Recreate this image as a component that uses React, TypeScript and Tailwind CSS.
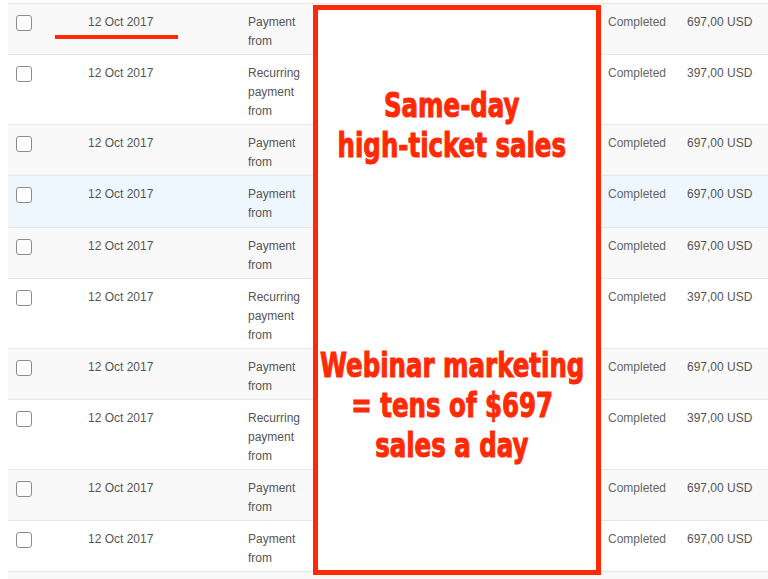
const rows = [
  { type: ["Payment", "from"], amount: "697,00 USD", bg: "bg-[#f9f9f9] pb-[3px]" },
  { type: ["Recurring", "payment", "from"], amount: "397,00 USD", bg: "bg-white pb-[3px]" },
  { type: ["Payment", "from"], amount: "697,00 USD", bg: "bg-[#f9f9f9] pb-[3px]" },
  { type: ["Payment", "from"], amount: "697,00 USD", bg: "bg-[#eef6fe] pb-[4px]" },
  { type: ["Payment", "from"], amount: "697,00 USD", bg: "bg-[#f9f9f9] pb-[3px]" },
  { type: ["Recurring", "payment", "from"], amount: "397,00 USD", bg: "bg-white pb-[3px]" },
  { type: ["Payment", "from"], amount: "697,00 USD", bg: "bg-[#f9f9f9] pb-[3px]" },
  { type: ["Recurring", "payment", "from"], amount: "397,00 USD", bg: "bg-white pb-[3px]" },
  { type: ["Payment", "from"], amount: "697,00 USD", bg: "bg-[#f9f9f9] pb-[3px]" },
  { type: ["Payment", "from"], amount: "697,00 USD", bg: "bg-white pb-[3px]" },
];

const Row = ({ type, amount, bg }: { type: string[]; amount: string; bg: string }) => {
  return (
    <div className={`flex border-b border-[#e6e6e6] pt-[9px] leading-[19px] ${bg}`}>
      <div className="w-[72px] pl-2">
        <div className="mt-[2px] h-4 w-4 rounded-[3px] border border-[#8d8d8d] bg-white" />
      </div>
      <div className="w-[160px] pl-2">12 Oct 2017</div>
      <div className="w-[68px] pl-2">
        {type.map((t, i) => (
          <div key={i}>{t}</div>
        ))}
      </div>
      <div className="w-[292px]" />
      <div className="w-[79px] pl-2 text-[#666]">Completed</div>
      <div className="flex-1 pl-2">{amount}</div>
    </div>
  );
};

const App = () => {
  return (
    <div className="relative h-[579px] w-[768px] overflow-hidden bg-white font-['Liberation_Sans',Arial,sans-serif] text-[12px] text-[#555]">
      <div className="ml-2 mt-[3px] border-t border-[#e6e6e6]">
        {rows.map((r, i) => (
          <Row key={i} {...r} />
        ))}
        {/* next row, cut off by the bottom edge */}
        <div className="h-[20px] bg-[#f9f9f9]" />
      </div>

      {/* annotations */}
      <div className="absolute left-[55px] top-[35px] h-[4px] w-[123px] bg-[#fe2a05]" />
      <div className="absolute left-[313px] top-[5px] flex h-[570px] w-[288px] flex-col items-center border-[5px] border-[#fe2a05] bg-white pr-[10px] text-center font-['DejaVu_Sans_Condensed',sans-serif] text-[34px] font-bold leading-[40px] text-[#fe2a05] [-webkit-text-stroke:1px_#fe2a05]">
        <div className="mt-[75px] flex flex-col items-center">
          <div className="scale-x-[0.8] whitespace-nowrap">Same-day</div>
          <div className="scale-x-[0.8] whitespace-nowrap">high-ticket sales</div>
        </div>
        <div className="mt-[180px] flex flex-col items-center">
          <div className="scale-x-[0.8] whitespace-nowrap">Webinar marketing</div>
          <div className="scale-x-[0.8] whitespace-nowrap">= tens of $697</div>
          <div className="scale-x-[0.8] whitespace-nowrap">sales a day</div>
        </div>
      </div>
    </div>
  );
};

export default App;
